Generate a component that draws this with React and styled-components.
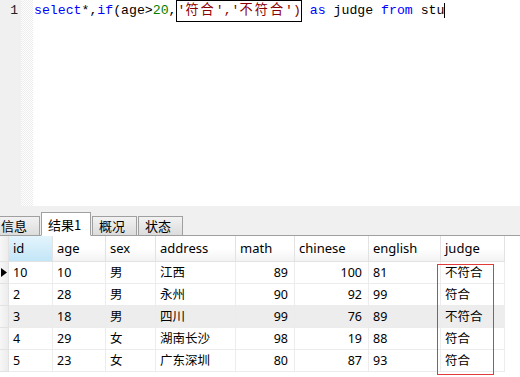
import React from 'react'
import styled, { createGlobalStyle } from 'styled-components'

const Global = createGlobalStyle`
  body { margin: 0; background: #fff; }
  * { box-sizing: border-box; }
`

const Page = styled.div`
  width: 520px;
  height: 377px;
  overflow: hidden;
  display: flex;
  flex-direction: column;
  font-family: "Noto Sans", "Noto Sans CJK SC", sans-serif;
  font-size: 12px;
  color: #000;
`

const Editor = styled.div`
  height: 206px;
  display: flex;
  background: #fff;
`

const Gutter = styled.div`
  width: 21px;
  background: #f0f0f0;
  font-family: "Liberation Mono", monospace;
  font-size: 13px;
  color: #222;
  text-align: right;
  padding: 3px 3px 0 0;
`

const Dither = styled.div`
  width: 12px;
  background: repeating-conic-gradient(#ececec 0% 25%, #fff 0% 50%) 0 0 / 2px 2px;
`

const Code = styled.div`
  padding: 3px 0 0 1px;
  font-family: "Liberation Mono", "Noto Sans CJK SC", monospace;
  font-size: 13.2px;
  white-space: pre;
  height: 18px;
  line-height: 15px;
  display: flex;
  align-items: flex-start;
`

const Tok = styled.span`
  color: ${p => p.$c || '#000'};
`

const Match = styled.span`
  border: 1px solid #000;
  margin-top: -3px;
  padding: 2px 0 3px;
  line-height: 15px;
  color: #8b0000;
`

const Han = styled.span`
  letter-spacing: 2px;
`

const Caret = styled.span`
  display: inline-block;
  width: 1px;
  height: 15px;
  background: #000;
`

const TabBar = styled.div`
  height: 30px;
  background: #f0f0f0;
  display: flex;
  align-items: flex-end;
  border-bottom: 1px solid #a0a0a0;
`

const Tab = styled.div`
  height: ${p => (p.$active ? '24px' : '20px')};
  margin-bottom: -1px;
  margin-left: ${p => (p.$first ? '-4px' : '1px')};
  width: ${p => p.$w}px;
  border: 1px solid #a0a0a0;
  border-bottom: ${p => (p.$active ? '1px solid #fff' : '1px solid #a0a0a0')};
  background: ${p => (p.$active ? '#fff' : 'linear-gradient(#f2f2f2, #dcdcdc)')};
  font-family: "Noto Sans CJK SC", sans-serif;
  font-size: 13px;
  line-height: 18px;
  padding-left: ${p => (p.$first ? '4px' : '6px')};
  padding-top: ${p => (p.$active ? '3px' : '0')};
`

const Grid = styled.div`
  position: relative;
  flex: 1;
  display: grid;
  grid-template-columns: 9px 44px 53px 50px 80px 59px 74px 72px 64px 1fr;
  grid-auto-rows: 22px;
  grid-template-rows: 26px;
  align-content: start;
`

const Head = styled.div`
  border-right: 1px solid #e2e2e2;
  border-bottom: 1px solid #e2e2e2;
  background: ${p => (p.$sel ? 'linear-gradient(#e3f4fc, #c3e6f8)' : 'linear-gradient(#fff 50%, #f3f3f3)')};
  padding: 0 4px;
  line-height: 25px;
  font-size: 13px;
`

const Blank = styled.div`
  background: #fff;
`

const Marker = styled.div`
  background: ${p => (p.$sel ? 'linear-gradient(#e3f4fc, #c3e6f8)' : 'linear-gradient(90deg, #f7f7f7, #ececec)')};
  border-right: 1px solid #e2e2e2;
  border-bottom: 1px solid #e2e2e2;
  display: flex;
  align-items: center;
`

const Cell = styled.div`
  border-right: 1px solid #ececec;
  border-bottom: 1px solid #ececec;
  background: ${p => (p.$alt ? '#ededed' : '#fff')};
  padding: 0 ${p => (p.$num ? '6px' : '4px')} 0 4px;
  line-height: 21px;
  font-size: 12.5px;
  font-family: "Noto Sans", "Noto Sans CJK SC", sans-serif;
  text-align: ${p => (p.$num ? 'right' : 'left')};
  white-space: nowrap;
`

const Highlight = styled.div`
  position: absolute;
  left: 437px;
  top: 28px;
  width: 57px;
  height: 111px;
  border: 1px solid #e03a3a;
  pointer-events: none;
`

const cols = ['id', 'age', 'sex', 'address', 'math', 'chinese', 'english', 'judge']

const rows = [
  ['10', '10', '男', '江西', '89', '100', '81', '不符合'],
  ['2', '28', '男', '永州', '90', '92', '99', '符合'],
  ['3', '18', '男', '四川', '99', '76', '89', '不符合'],
  ['4', '29', '女', '湖南长沙', '98', '19', '88', '符合'],
  ['5', '23', '女', '广东深圳', '80', '87', '93', '符合'],
]

const tabs = [
  { label: '信息', w: 44 },
  { label: '结果1', w: 50, active: true },
  { label: '概况', w: 45 },
  { label: '状态', w: 45 },
]

function App() {
  return (
    <Page>
      <Global />
      <Editor>
        <Gutter>1</Gutter>
        <Dither />
        <Code>
          <Tok $c="#0000ff">select</Tok>
          <Tok>*,</Tok>
          <Tok $c="#0000ff">if</Tok>
          <Tok>(age&gt;</Tok>
          <Tok $c="#008000">20</Tok>
          <Tok>,</Tok>
          <Match>'<Han>符合</Han>','<Han>不符合</Han>')</Match>
          <Tok> </Tok>
          <Tok $c="#0000ff">as</Tok>
          <Tok> judge </Tok>
          <Tok $c="#0000ff">from</Tok>
          <Tok> stu</Tok>
          <Caret />
        </Code>
      </Editor>
      <TabBar>
        {tabs.map((t, i) => (
          <Tab key={t.label} $w={t.w} $active={t.active} $first={i === 0}>{t.label}</Tab>
        ))}
      </TabBar>
      <Grid>
        <Marker />
        {cols.map(c => <Head key={c} $sel={c === 'id'}>{c}</Head>)}
        <Blank />
        {rows.map((r, ri) => (
          <React.Fragment key={ri}>
            <Marker>
              {ri === 0 && (
                <svg width="8" height="11" viewBox="0 0 8 11"><path d="M1 1 L7 5.5 L1 10 Z" fill="#000" /></svg>
              )}
            </Marker>
            {r.map((v, ci) => (
              <Cell key={ci} $alt={ri === 2} $num={ci === 4 || ci === 5}>{v}</Cell>
            ))}
            <Blank />
          </React.Fragment>
        ))}
        <Highlight />
      </Grid>
    </Page>
  )
}

export default App
